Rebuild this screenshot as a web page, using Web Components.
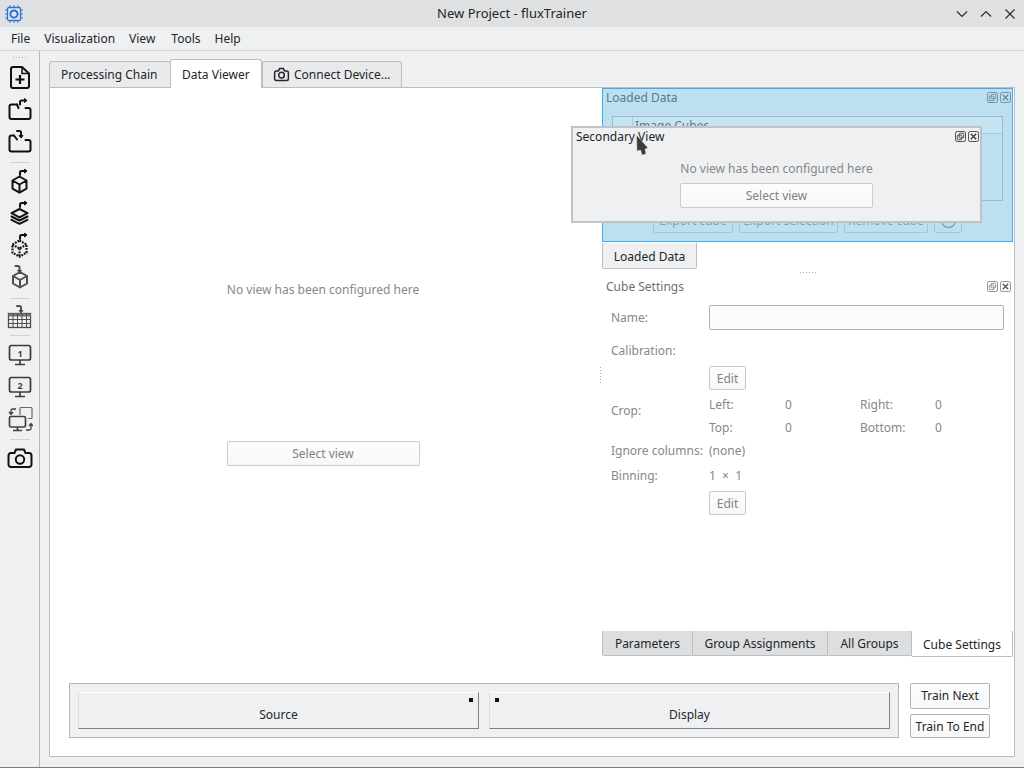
<!DOCTYPE html>
<html><head><meta charset="utf-8"><title>New Project - fluxTrainer</title>
<style>
html,body{margin:0;padding:0;width:1024px;height:768px;overflow:hidden;background:#eff0f1;font:12px "Noto Sans",sans-serif;color:#232629}
</style></head><body>
<flux-app></flux-app>
<script>
const S='fill="none" stroke="#111" stroke-width="2" stroke-linecap="round" stroke-linejoin="round"';
const aOut=(x,y)=>`<path d="M${x} ${y+4.5}V${y+2}a1.500 1.500 0 0 1 1.500-1.500H${x+5.500}" ${S}/><path d="M${x+4.500} ${y-1.500}l2.500 2-2.500 2z" fill="#111" stroke="#111" stroke-linejoin="round"/>`;
const aIn=(x,y)=>`<path d="M${x} ${y}h2.500a1.500 1.500 0 0 1 1.500 1.500V${y+5}" ${S}/><path d="M${x+2} ${y+4.500}l2 2.500 2-2.500z" fill="#111" stroke="#111" stroke-linejoin="round"/>`;
const cube=`<path d="M12.500 7.500l7 4v8.200l-7 4-7-4v-8.200zM5.500 11.500l7 4 7-4M12.500 15.500v8" ${S}/>`;
const ICONS={
 doc:`<path d="M6 2h9l7 6.500v12.500a2 2 0 0 1-2 2H6a2 2 0 0 1-2-2V4a2 2 0 0 1 2-2z" ${S}/><path d="M15 2v6.500h7" fill="none" stroke="#111" stroke-width="1.500"/><path d="M13 10v9M8.500 14.500h9" fill="none" stroke="#111" stroke-width="2.200"/>`,
 fout:`<path d="M10 7.500H4.500a2 2 0 0 0-2 2v10.500a2 2 0 0 0 2 2h17a2 2 0 0 0 2-2v-7a2 2 0 0 0-2-2h-3" ${S}/><path d="M10 7.500l1.500 3.500" ${S}/>${aOut(13,3)}`,
 fin:`<path d="M7 6.500H4.500a2 2 0 0 0-2 2v12a2 2 0 0 0 2 2h17a2 2 0 0 0 2-2v-7.500a2 2 0 0 0-2-2h-3" ${S}/><path d="M7 6.500l3 4" ${S}/>${aIn(10,2)}`,
 cubeo:`${cube}${aOut(13,1.500)}`,
 layers:`<path d="M12.500 8l8 4.200-8 4.200-8-4.200z" ${S}/><path d="M4.500 15.500l8 4 8-4M4.500 18.800l8 4 8-4" ${S}/>${aOut(13,1.500)}`,
 cubed:`<path d="M12.500 7.500l7 4v8.200l-7 4-7-4v-8.200zM5.500 11.500l7 4 7-4M12.500 15.500v8" fill="none" stroke="#111" stroke-width="2.200" stroke-dasharray="1.800 1.100"/>${aOut(13,1.500)}`,
 cubei:`<g opacity=".72"><path d="M13 7l7 4v7.500l-7 4-7-4V11zM6 11l7 4 7-4M13 15v7.500" ${S}/>${aIn(8.500,1)}</g>`,
 table:`<g opacity=".72"><rect x="1.500" y="9.500" width="22" height="14" fill="none" stroke="#111" stroke-width="1.300"/><path d="M1.500 9.500h22v3h-22z" fill="#444"/><path d="M1.500 15.500h22M1.500 19.500h22M6 9.500v14M10.500 9.500v14M15 9.500v14M19.500 9.500v14" stroke="#111" fill="none" stroke-width="1"/>${aIn(10,2)}</g>`,
 m1:`<g opacity=".8"><rect x="2.500" y="3.500" width="21" height="14.500" rx="2" fill="none" stroke="#111" stroke-width="1.700"/><path d="M13 18v4M8 22.500h10" stroke="#111" stroke-width="1.700" fill="none"/><text x="13" y="14.500" text-anchor="middle" font-family="Noto Sans" font-weight="700" font-size="9" fill="#111">1</text></g>`,
 m2:`<g opacity=".8"><rect x="2.500" y="3.500" width="21" height="14.500" rx="2" fill="none" stroke="#111" stroke-width="1.700"/><path d="M13 18v4M8 22.500h10" stroke="#111" stroke-width="1.700" fill="none"/><text x="13" y="14.500" text-anchor="middle" font-family="Noto Sans" font-weight="700" font-size="9" fill="#111">2</text></g>`,
 swap:`<g opacity=".78"><path d="M13 9V2.500a1 1 0 0 1 1-1h10a1 1 0 0 1 1 1v9a1 1 0 0 1-1 1h-3" fill="none" stroke="#444" stroke-width="1.200"/><rect x="2.500" y="10.500" width="16" height="10.500" rx="1.500" fill="none" stroke="#111" stroke-width="1.700"/><path d="M10.500 21v3M6 24.500h9" stroke="#111" stroke-width="1.700" fill="none"/><path d="M9 3H5.500a1.500 1.500 0 0 0-1.500 1.500V8M2 6l2 2.500L6 6M19 24h3.500a1.500 1.500 0 0 0 1.500-1.500V18M22 20l2-2.500 2 2.500" fill="none" stroke="#111" stroke-width="1.300"/></g>`,
 cam:`<path d="M1.500 9.500a2.500 2.500 0 0 1 2.500-2.500h3.500L9 3.500h8L18.500 7H22a2.500 2.500 0 0 1 2.500 2.500v9a2.500 2.500 0 0 1-2.500 2.500H4a2.500 2.500 0 0 1-2.500-2.500z" fill="none" stroke="#111" stroke-width="2" stroke-linejoin="round"/><circle cx="13" cy="13.500" r="4.200" fill="none" stroke="#111" stroke-width="2"/>`
};
function def(name,html,fn){customElements.define(name,class extends HTMLElement{constructor(){super();this.attachShadow({mode:'open'}).innerHTML=html;}connectedCallback(){fn&&fn(this)}});}

def('tool-icon',`<style>:host{display:block;width:26px;height:26px}svg{display:block}</style><svg width="26" height="26" viewBox="0 0 26 26"></svg>`,e=>{e.shadowRoot.querySelector('svg').innerHTML=ICONS[e.getAttribute('name')]});

def('title-bar',`<style>:host{display:grid;grid-template-columns:1fr auto 1fr;height:27px;background:#dee0e2;align-items:center;flex:none}
.t{text-align:center;color:#232629;font-size:13px;padding-bottom:2px}
svg{display:block}.ap{margin-left:4px;width:20px;height:20px}
.ws{display:flex;justify-self:end;margin-right:7px;align-items:center}.ws svg{margin-left:10px}</style>
<svg class="ap" viewBox="0 0 20 20"><path d="M6 1v18M10 1v18M14 1v18M1 6h18M1 10h18M1 14h18" stroke="#6a9be0" stroke-width="1.300" fill="none"/><rect x="3.500" y="3.500" width="13" height="13" rx="1.500" fill="#dde8f6" stroke="#2f6fc9" stroke-width="1.300"/><circle cx="10" cy="10" r="3.600" fill="none" stroke="#2f6fc9" stroke-width="2"/><circle cx="10" cy="10" r="1.200" fill="#cfe0f5"/></svg>
<div class="t">New Project - fluxTrainer</div>
<div class="ws"><svg width="14" height="14" viewBox="0 0 14 14"><path d="M2 4.500l5 5 5-5" fill="none" stroke="#2b2e31" stroke-width="1.200"/></svg><svg width="14" height="14" viewBox="0 0 14 14"><path d="M2 9.500l5-5 5 5" fill="none" stroke="#2b2e31" stroke-width="1.200"/></svg><svg width="14" height="14" viewBox="0 0 14 14"><path d="M2.500 2.500l9 9M11.500 2.500l-9 9" fill="none" stroke="#2b2e31" stroke-width="1.200"/></svg></div>`);

def('menu-bar',`<style>:host{display:flex;height:23px;border-bottom:1px solid #d3d5d7;align-items:center;flex:none;padding-left:4px;color:#232629}
span{padding:0 7px;line-height:22px}</style><span>File</span><span>Visualization</span><span>View</span><span style="margin-left:2px">Tools</span><span>Help</span>`);

def('tool-bar',`<style>:host{display:flex;flex-direction:column;align-items:center;width:39px;border-right:1px solid #b6b8ba;flex:none;padding-top:5px;box-sizing:content-box}
.g{width:16px;height:3px;margin-bottom:3px;flex:none;background-image:radial-gradient(#a8aaac .6px,transparent .7px);background-size:3px 3px}
.i{height:32px;flex:none;display:flex;align-items:center;justify-content:center}
.s{width:20px;height:1px;flex:none;background:#d0d2d4;margin:4px 0 3px}</style>
<div class="g"></div>
<div class="i"><tool-icon name="doc"></tool-icon></div>
<div class="i"><tool-icon name="fout"></tool-icon></div>
<div class="i"><tool-icon name="fin"></tool-icon></div>
<div class="s"></div>
<div class="i"><tool-icon name="cubeo"></tool-icon></div>
<div class="i"><tool-icon name="layers"></tool-icon></div>
<div class="i"><tool-icon name="cubed"></tool-icon></div>
<div class="i"><tool-icon name="cubei"></tool-icon></div>
<div class="s"></div>
<div class="i" style="height:29px"><tool-icon name="table"></tool-icon></div>
<div class="s"></div>
<div class="i"><tool-icon name="m1"></tool-icon></div>
<div class="i"><tool-icon name="m2"></tool-icon></div>
<div class="i"><tool-icon name="swap"></tool-icon></div>
<div class="s"></div>
<div class="i"><tool-icon name="cam"></tool-icon></div>`);

def('top-tab',`<style>:host{display:flex;align-items:center;box-sizing:border-box;height:26px;padding:0 10px 1px 11px;border:1px solid #bcbec0;border-bottom:none;border-radius:3px 3px 0 0;background:#e9eaeb;color:#232629;gap:4px;white-space:nowrap;margin-right:-1px}
:host([sel]){background:#fff;height:29px;margin-top:-2px;padding-top:2px;padding-bottom:1px;position:relative;z-index:1;margin-bottom:-1px}
svg{display:block}</style><slot name="i"></slot><slot></slot>`);

def('qt-button',`<style>:host{display:flex;align-items:center;justify-content:center;box-sizing:border-box;height:25px;border:1px solid #c9cbcd;border-radius:2px;background:linear-gradient(#fdfdfd,#f7f7f8);color:#7f8285;white-space:nowrap}
:host([en]){color:#232629;border-color:#b0b2b4}</style><slot></slot>`);

def('no-view',`<style>:host{display:flex;flex:1;flex-direction:column;align-items:center;color:#85888b;min-width:0}
.t{margin-top:192px;line-height:20px;height:20px}qt-button{width:193px;margin-top:141px}</style>
<div class="t">No view has been configured here</div><qt-button>Select view</qt-button>`);

def('dock-title',`<style>:host{display:flex;align-items:center;height:20px;padding-left:var(--pl,4px);padding-right:var(--pr,3px);color:var(--c,#6d7073);flex:none}
.l{flex:1}svg{display:block;margin-left:2px}</style><div class="l"><slot></slot></div>
<svg width="11" height="11" viewBox="0 0 12 12"><rect x=".5" y=".5" width="11" height="11" rx="2" fill="none" stroke="var(--ic,#85888b)"/><rect x="4.500" y="2.500" width="5" height="5" rx="1" fill="none" stroke="var(--ic,#85888b)"/><rect x="2.500" y="4.500" width="5" height="5" rx="1" fill="none" stroke="var(--ic,#85888b)"/></svg>
<svg width="11" height="11" viewBox="0 0 12 12"><rect x=".5" y=".5" width="11" height="11" rx="2" fill="none" stroke="var(--ic,#85888b)"/><path d="M3 3l6 6M9 3L3 9" stroke="var(--ic,#55585b)" stroke-width="1.500"/></svg>`);

def('loaded-dock',`<style>:host{display:flex;flex-direction:column;box-sizing:border-box;height:154px;background:#bde0f1;border:1px solid #3daee9;color:#6f8fa0;flex:none;margin-right:1px;--pl:3px;--pr:1px;--c:#5a7a8b;--ic:#6d8a99}
dock-title{height:16px}
.tree{margin:11px 9px 0 9px;height:85px;box-sizing:border-box;border:1px solid #9dbccb;flex:none}
.h{height:17px;box-sizing:border-box;border-bottom:1px solid #a9cbdb;padding-left:22px;line-height:17px;position:relative;background:#c6e3f2;overflow:hidden;color:#5a7a8b}
.h::before{content:"";position:absolute;left:19px;top:0;bottom:0;border-left:1px solid #a9cbdb}
.b{display:flex;margin:7px 0 0 50px;gap:6px;height:25px}
.b span{box-sizing:border-box;border:1px solid #a6c6d5;border-radius:2px;line-height:23px;color:#82a0af;white-space:nowrap;text-align:center}
svg{display:block;margin:3px auto}
</style><dock-title>Loaded Data</dock-title>
<div class="tree"><div class="h">Image Cubes</div></div>
<div class="b"><span style="width:80px">Export cube</span><span style="width:99px">Export selection</span><span style="width:84px">Remove cube</span><span style="width:28px"><svg width="17" height="17" viewBox="0 0 17 17"><circle cx="8.500" cy="8.500" r="7" fill="none" stroke="#82a0af" stroke-width="1.500"/></svg></span></div>`);

def('cube-settings',`<style>:host{display:flex;flex-direction:column;flex:1;color:#85888b;min-height:0}
.f{display:grid;grid-template-columns:98px 295px;padding:9px 0 0 9px;align-items:start}
.in{height:25px;box-sizing:border-box;border:1px solid #b0b2b4;border-radius:2px;background:#fcfcfc}
.l{line-height:20px;white-space:nowrap}
qt-button{width:37px;height:24px}
.crop{display:grid;grid-template-columns:76px 75px 75px 1fr;row-gap:3px;line-height:20px}
</style><dock-title>Cube Settings</dock-title>
<div class="f">
<div class="l" style="margin-top:3px">Name:</div><div class="in"></div>
<div class="l" style="margin-top:11px">Calibration:</div><div></div>
<div></div><qt-button style="margin-top:5px">Edit</qt-button>
<div class="l" style="margin-top:11px">Crop:</div><div class="crop" style="margin-top:5px"><span>Left:</span><span>0</span><span>Right:</span><span>0</span><span>Top:</span><span>0</span><span>Bottom:</span><span>0</span></div>
<div class="l" style="margin-top:3px">Ignore columns:</div><div class="l" style="margin-top:3px">(none)</div>
<div class="l" style="margin-top:5px">Binning:</div><div class="l" style="margin-top:5px">1 &nbsp;× &nbsp;1</div>
<div></div><qt-button style="margin-top:5px">Edit</qt-button>
</div>`);

def('side-tab',`<style>:host{display:flex;align-items:center;justify-content:center;box-sizing:border-box;height:25px;border:1px solid #bcbec0;border-top:none;border-radius:0 0 2px 2px;background:#dcdee0;white-space:nowrap;color:#232629}
:host([sel]){background:#fff;height:26px;padding-top:1px}</style><slot></slot>`);

def('source-btn',`<style>:host{display:flex;flex:1;box-sizing:border-box;height:37px;border-top:1px solid #fcfcfc;border-bottom:1px solid #7f8285;border-left:1px solid #dcdee0;border-right:1px solid #7f8285;position:relative;align-items:flex-end;justify-content:center;padding-bottom:3px;line-height:20px;color:#232629}
i{position:absolute;top:5px;width:4px;height:4px;background:#111}
:host([a="r"]) i{right:5px}:host([a="l"]) i{left:5px}</style><i></i><slot></slot>`);

def('bottom-controls',`<style>:host{display:flex;flex:none;padding:26px 24px 18px 19px;gap:11px;align-items:flex-start}
.g{flex:1;box-sizing:border-box;height:55px;border:1px solid #b6b8ba;display:flex;gap:10px;padding:8px 8px 0 8px;background:#eff0f1}
.c{display:flex;flex-direction:column;gap:5px;width:80px}
qt-button{height:26px;padding-bottom:2px}</style>
<div class="g"><source-btn a="r">Source</source-btn><source-btn a="l">Display</source-btn></div>
<div class="c"><qt-button en>Train Next</qt-button><qt-button en style="height:24px;padding-bottom:0">Train To End</qt-button></div>`);

def('float-view',`<style>:host{position:absolute;left:571px;top:126px;width:411px;height:97px;box-sizing:border-box;border:2px solid #c0c2c4;background:#eff0f1;display:flex;flex-direction:column;align-items:center;color:#85888b;z-index:5;--c:#232629;--ic:#3a3c3e;--pl:3px;--pr:1px}
dock-title{align-self:stretch;height:16px}
.t{margin-top:15px;line-height:20px}qt-button{width:193px;margin-top:4px}</style>
<dock-title>Secondary View</dock-title><div class="t">No view has been configured here</div><qt-button>Select view</qt-button>`);

def('flux-app',`<style>:host{display:flex;flex-direction:column;width:1024px;height:768px;position:relative;background:#eff0f1;overflow:hidden;box-sizing:border-box;border-bottom:1px solid #7a7c7e}
.body{display:flex;flex:1;min-height:0}
.main{flex:1;display:flex;flex-direction:column;padding:10px 9px 10px 9px;min-width:0}
.tabs{display:flex;flex:none;height:26px;align-items:flex-start}
.pane{flex:1;display:flex;flex-direction:column;border:1px solid #bcbec0;background:#fff;min-height:0}
.top{flex:1;display:flex;min-height:0}
.vs{width:6px;flex:none;position:relative}
.vs i{display:block;width:1px;height:17px;background-image:linear-gradient(#a8aaac 1px,transparent 1px);background-size:1px 3px;position:absolute;left:4px;top:279px}
.r{width:412px;flex:none;display:flex;flex-direction:column}
.lt{display:flex;flex:none;margin-top:1px}
.lt span{box-sizing:border-box;width:95px;height:26px;border:1px solid #bcbec0;border-top:none;border-radius:0 0 2px 2px;background:#eff0f1;text-align:center;line-height:27px;color:#232629}
.hs{height:7px;flex:none;position:relative}
.hs i{display:block;width:17px;height:1px;background-image:linear-gradient(90deg,#a8aaac 1px,transparent 1px);background-size:3px 1px;position:absolute;left:198px;top:3px}
.bt{display:flex;flex:none;height:26px}
svg.cur{position:absolute;left:635px;top:134px;z-index:9}
</style>
<title-bar></title-bar><menu-bar></menu-bar>
<div class="body"><tool-bar></tool-bar>
<div class="main">
<div class="tabs"><top-tab style="padding-left:11px;width:122px">Processing Chain</top-tab><top-tab sel style="width:92px;padding-left:11px">Data Viewer</top-tab><top-tab style="width:140px;margin-left:1px;padding-left:10px"><svg slot="i" width="17" height="15" viewBox="0 0 26 24"><path d="M2 9a2.500 2.500 0 0 1 2.500-2.500H8L10 2.500h6l2 4h3.500A2.500 2.500 0 0 1 24 9v10a2.500 2.500 0 0 1-2.500 2.500h-17A2.500 2.500 0 0 1 2 19z" fill="none" stroke="#232629" stroke-width="2.400"/><circle cx="13" cy="13" r="4.500" fill="none" stroke="#232629" stroke-width="2.400"/></svg>Connect Device...</top-tab></div>
<div class="pane">
<div class="top"><no-view></no-view><div class="vs"><i></i></div>
<div class="r">
<loaded-dock></loaded-dock>
<div class="lt"><span>Loaded Data</span></div>
<div class="hs"><i></i></div>
<cube-settings></cube-settings>
<div class="bt"><side-tab style="width:91px">Parameters</side-tab><side-tab style="width:136px;margin-left:-1px">Group Assignments</side-tab><side-tab style="width:85px;margin-left:-1px">All Groups</side-tab><side-tab sel style="width:102px;margin-left:-1px">Cube Settings</side-tab></div>
</div></div>
<bottom-controls></bottom-controls>
</div></div></div>
<float-view></float-view>
<svg class="cur" width="16" height="24" viewBox="0 0 16 24"><path d="M1.500 1L13 14l-3 1 1 5-4 1-1.500-5-3.500 1z" fill="#3a3c3e" stroke="#eee" stroke-width=".4"/></svg>`);
</script></body></html>
